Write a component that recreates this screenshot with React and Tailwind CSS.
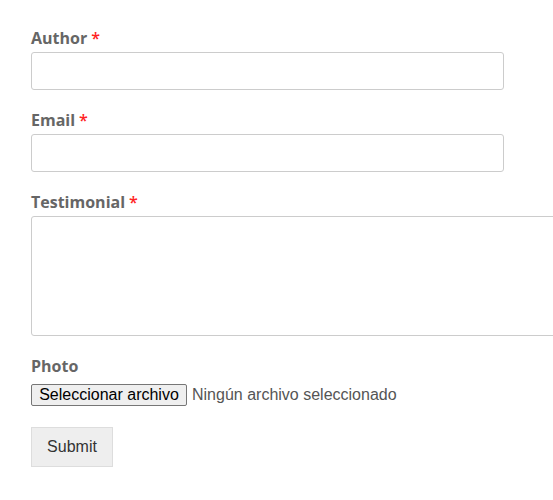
import React from "react";

const Label = ({ text, required, className = "" }) => (
  <label
    className={`block text-base font-bold leading-6 text-[#666] ${className}`}
    style={{ fontFamily: '"Open Sans", sans-serif' }}
  >
    {text}
    {required && <span className="ml-1 font-semibold text-[#f22]">*</span>}
  </label>
);

export default function App() {
  return (
    <div className="w-[553px] h-[500px] overflow-hidden bg-white">
      <form className="pl-[31px] pt-[26px]">
        <Label text="Author" required />
        <input
          type="text"
          className="mt-[2px] block h-[38px] w-[473px] rounded-[3px] border border-[#ccc] bg-white"
        />

        <Label text="Email" required className="mt-[18px]" />
        <input
          type="text"
          className="mt-[2px] block h-[38px] w-[473px] rounded-[3px] border border-[#ccc] bg-white"
        />

        <Label text="Testimonial" required className="mt-[18px]" />
        <textarea className="mt-[2px] block h-[120px] w-[600px] resize-none rounded-[3px] border border-[#ccc] bg-white" />

        <Label text="Photo" className="mt-[18px]" />
        <div
          className="mt-[5px] flex items-center text-base text-[#555]"
          style={{ fontFamily: '"Liberation Sans", Arial, sans-serif' }}
        >
          <span className="flex h-[22px] w-[156px] items-center justify-center rounded-[2px] border border-[#767676] bg-[#efefef] text-black">
            Seleccionar archivo
          </span>
          <span className="ml-[5px]">Ningún archivo seleccionado</span>
        </div>

        <button
          type="button"
          className="mt-[20px] block h-[40px] w-[82px] border border-[#ddd] bg-[#eee] text-base text-[#333]"
          style={{ fontFamily: '"Liberation Sans", Arial, sans-serif' }}
        >
          Submit
        </button>
      </form>
    </div>
  );
}
